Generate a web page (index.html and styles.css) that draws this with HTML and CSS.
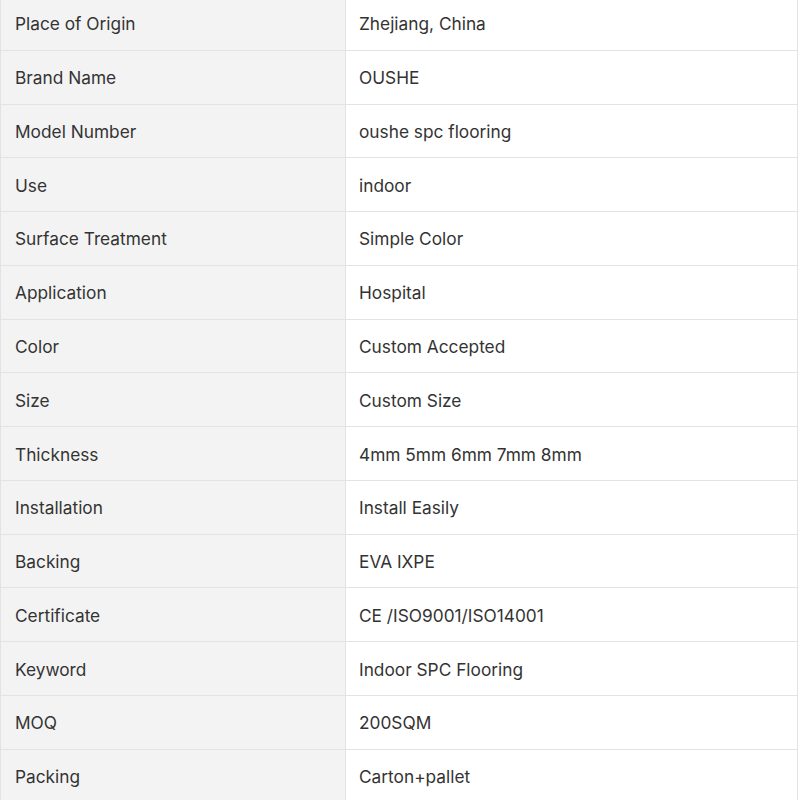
FILE: index.html
```html
<!DOCTYPE html>
<html>
<head>
<meta charset="utf-8">
<link rel="stylesheet" href="styles.css">
</head>
<body>
<table class="specs">
<tbody>
<tr><td class="k">Place of Origin</td><td class="v">Zhejiang, China</td></tr>
<tr><td class="k">Brand Name</td><td class="v">OUSHE</td></tr>
<tr><td class="k">Model Number</td><td class="v">oushe spc flooring</td></tr>
<tr><td class="k">Use</td><td class="v">indoor</td></tr>
<tr><td class="k">Surface Treatment</td><td class="v">Simple Color</td></tr>
<tr><td class="k">Application</td><td class="v">Hospital</td></tr>
<tr><td class="k">Color</td><td class="v">Custom Accepted</td></tr>
<tr><td class="k">Size</td><td class="v">Custom Size</td></tr>
<tr><td class="k">Thickness</td><td class="v">4mm 5mm 6mm 7mm 8mm</td></tr>
<tr><td class="k">Installation</td><td class="v">Install Easily</td></tr>
<tr><td class="k">Backing</td><td class="v">EVA IXPE</td></tr>
<tr><td class="k">Certificate</td><td class="v">CE /ISO9001/ISO14001</td></tr>
<tr><td class="k">Keyword</td><td class="v">Indoor SPC Flooring</td></tr>
<tr><td class="k">MOQ</td><td class="v">200SQM</td></tr>
<tr><td class="k">Packing</td><td class="v">Carton+pallet</td></tr>
</tbody>
</table>
</body>
</html>
```
FILE: styles.css
```css
html, body {
  margin: 0;
  padding: 0;
  background: #ffffff;
}
body {
  font-family: Inter, "Noto Sans", sans-serif;
  font-size: 17.3px;
  color: #333333;
  overflow: hidden;
}
.specs {
  border-collapse: collapse;
  width: 798px;
  margin-top: -4px;
  table-layout: fixed;
}
.specs tr {
  height: 53.77px;
}
.specs td {
  border: 1px solid #e3e3e3;
  padding: 2px 14px 0;
  vertical-align: middle;
  line-height: 20px;
}
.specs td.k {
  width: 316px;
  background: #f3f3f3;
}
.specs td.v {
  padding-left: 13px;
  background: #ffffff;
}
```
